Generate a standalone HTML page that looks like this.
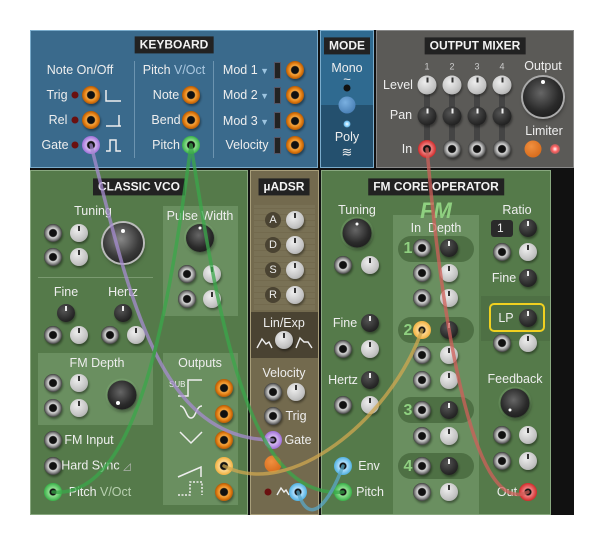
<!DOCTYPE html>
<html><head><meta charset="utf-8">
<style>
*{margin:0;padding:0;box-sizing:border-box}
body{width:604px;height:545px;background:#fff;position:relative;overflow:hidden;font-family:"Liberation Sans",sans-serif}
.p{position:absolute}
.t{position:absolute;color:#eee;font-size:12.5px;transform:translate(-50%,-50%);white-space:nowrap;line-height:1}
.h{position:absolute;background:#222;color:#f2f2f2;font-size:12px;font-weight:bold;padding:2px 5px;transform:translate(-50%,-50%);white-space:nowrap;line-height:1.1}
.c{position:absolute;transform:translate(-50%,-50%);border-radius:50%}
.j{width:18px;height:18px;background:radial-gradient(circle,#111 0 3.5px,#d8d8d8 4.5px,#8a8a8a 7px,#555 8.5px,#333 9px);box-shadow:1px 2px 2px rgba(0,0,0,.4)}
.o{width:18px;height:18px;background:radial-gradient(circle,#111 0 3.5px,#f5a640 4.5px,#e07a10 7px,#b05a08 9px);box-shadow:1px 2px 2px rgba(0,0,0,.4)}
.k{width:18px;height:18px;background:radial-gradient(circle at 40% 35%,#eee,#c4c4c4 60%,#999);box-shadow:1px 2px 2px rgba(0,0,0,.4)}
.d{width:18px;height:18px;background:radial-gradient(circle at 40% 35%,#555,#2a2a2a 60%,#111);box-shadow:1px 2px 2px rgba(0,0,0,.4)}
.k::after,.d::after{content:"";position:absolute;left:50%;top:2px;width:2px;height:5px;margin-left:-1px;background:#333}
.d::after{background:#eee}
.big{background:radial-gradient(circle at 45% 40%,#666,#2a2a2a 55%,#111);box-shadow:1px 2px 3px rgba(0,0,0,.5),0 0 0 2px rgba(150,200,140,.25)}
.led{width:7px;height:7px;background:#6a1010}
</style></head><body>
<div class="p" style="left:30px;top:30px;width:544px;height:485px;background:#111"></div>
<!-- Keyboard -->
<div class="p" style="left:30px;top:30px;width:288px;height:138px;background:#3a6a8c;border:1px solid #7aaccc"></div>
<div class="h" style="left:174px;top:45px">KEYBOARD</div>
<div class="p" style="left:134px;top:61px;width:1px;height:97px;background:#6c94b0"></div>
<div class="p" style="left:213px;top:61px;width:1px;height:97px;background:#6c94b0"></div>
<div class="t" style="left:80px;top:70px">Note On/Off</div>
<div class="t" style="left:57px;top:95px">Trig</div>
<div class="t" style="left:58px;top:120px">Rel</div>
<div class="t" style="left:55px;top:145px">Gate</div>
<div class="c led" style="left:75px;top:95px"></div>
<div class="c led" style="left:75px;top:120px"></div>
<div class="c led" style="left:75px;top:145px"></div>
<div class="c o" style="left:91px;top:95px"></div>
<div class="c o" style="left:91px;top:120px"></div>
<div class="c" style="left:91px;top:145px;width:18px;height:18px;background:radial-gradient(circle,#111 0 3.5px,#d4b8f0 4.5px,#a070d8 9px)"></div>
<svg class="p" style="left:104px;top:86px" width="20" height="66" fill="none" stroke="#eee" stroke-width="1.5">
<path d="M2 4v11h15"/><path d="M2 40h13v-11M12 40h5"/><path d="M2 65h4v-11h6v11h5"/></svg>
<div class="t" style="left:174px;top:70px">Pitch <span style="color:#aac8e0">V/Oct</span></div>
<div class="t" style="left:166px;top:95px">Note</div>
<div class="t" style="left:166px;top:120px">Bend</div>
<div class="t" style="left:166px;top:145px">Pitch</div>
<div class="c o" style="left:191px;top:95px"></div>
<div class="c o" style="left:191px;top:120px"></div>
<div class="c" style="left:191px;top:145px;width:18px;height:18px;background:radial-gradient(circle,#111 0 3.5px,#90e090 4.5px,#38b048 9px)"></div>
<div class="t" style="left:246px;top:70px">Mod 1<span style="color:#9cc4e0;font-size:9px"> ▼</span></div>
<div class="t" style="left:246px;top:95px">Mod 2<span style="color:#9cc4e0;font-size:9px"> ▼</span></div>
<div class="t" style="left:246px;top:121px">Mod 3<span style="color:#9cc4e0;font-size:9px"> ▼</span></div>
<div class="t" style="left:247px;top:145px">Velocity</div>
<div class="p" style="left:274px;top:62px;width:7px;height:17px;background:#222;border:1px solid #556"></div>
<div class="p" style="left:274px;top:87px;width:7px;height:17px;background:#222;border:1px solid #556"></div>
<div class="p" style="left:274px;top:112px;width:7px;height:17px;background:#222;border:1px solid #556"></div>
<div class="p" style="left:274px;top:137px;width:7px;height:17px;background:#222;border:1px solid #556"></div>
<div class="c o" style="left:295px;top:70px"></div>
<div class="c o" style="left:295px;top:95px"></div>
<div class="c o" style="left:295px;top:121px"></div>
<div class="c o" style="left:295px;top:145px"></div>
<!-- Mode -->
<div class="p" style="left:320px;top:30px;width:54px;height:138px;background:#2f6a90;border:1px solid #7aaccc"></div>
<div class="p" style="left:321px;top:105px;width:52px;height:62px;background:#24506e"></div>
<div class="h" style="left:347px;top:46px">MODE</div>
<div class="t" style="left:347px;top:68px">Mono</div>
<div class="t" style="left:347px;top:79px;font-size:13px">~</div>
<div class="c" style="left:347px;top:88px;width:7px;height:7px;background:#111"></div>
<div class="c" style="left:347px;top:105px;width:17px;height:17px;background:radial-gradient(circle at 40% 35%,#7ab0e0,#3a70a8)"></div>
<div class="c" style="left:347px;top:124px;width:7px;height:7px;background:radial-gradient(circle,#fff,#80d0ff 50%,rgba(80,180,255,0) 100%)"></div>
<div class="t" style="left:347px;top:137px">Poly</div>
<div class="t" style="left:347px;top:152px;font-size:13px">≋</div>
<!-- Output mixer -->
<div class="p" style="left:376px;top:30px;width:198px;height:138px;background:#5b5a57;border:1px solid #888"></div>
<div class="h" style="left:475px;top:46px">OUTPUT MIXER</div>
<div class="t" style="left:427px;top:67px;font-size:9px;color:#ccc">1</div>
<div class="t" style="left:452px;top:67px;font-size:9px;color:#ccc">2</div>
<div class="t" style="left:477px;top:67px;font-size:9px;color:#ccc">3</div>
<div class="t" style="left:502px;top:67px;font-size:9px;color:#ccc">4</div>
<div class="t" style="left:398px;top:85px">Level</div>
<div class="t" style="left:401px;top:115px">Pan</div>
<div class="t" style="left:407px;top:149px">In</div>
<div class="p" style="left:424px;top:90px;width:6px;height:55px;background:#444"></div>
<div class="p" style="left:449px;top:90px;width:6px;height:55px;background:#444"></div>
<div class="p" style="left:474px;top:90px;width:6px;height:55px;background:#444"></div>
<div class="p" style="left:499px;top:90px;width:6px;height:55px;background:#444"></div>
<div class="c k" style="left:427px;top:85px;width:19px;height:19px"></div>
<div class="c k" style="left:452px;top:85px;width:19px;height:19px"></div>
<div class="c k" style="left:477px;top:85px;width:19px;height:19px"></div>
<div class="c k" style="left:502px;top:85px;width:19px;height:19px"></div>
<div class="c d" style="left:427px;top:116px;width:19px;height:19px"></div>
<div class="c d" style="left:452px;top:116px;width:19px;height:19px"></div>
<div class="c d" style="left:477px;top:116px;width:19px;height:19px"></div>
<div class="c d" style="left:502px;top:116px;width:19px;height:19px"></div>
<div class="c" style="left:427px;top:149px;width:18px;height:18px;background:radial-gradient(circle,#111 0 3.5px,#f08080 4.5px,#d02a2a 9px)"></div>
<div class="c j" style="left:452px;top:149px"></div>
<div class="c j" style="left:477px;top:149px"></div>
<div class="c j" style="left:502px;top:149px"></div>
<div class="t" style="left:543px;top:66px">Output</div>
<div class="c big" style="left:543px;top:97px;width:40px;height:40px;box-shadow:0 0 0 2px #aaa,1px 3px 4px rgba(0,0,0,.5)"></div>
<div class="c" style="left:543px;top:82px;width:4px;height:4px;background:#fff"></div>
<div class="t" style="left:544px;top:131px">Limiter</div>
<div class="c" style="left:533px;top:149px;width:17px;height:17px;background:radial-gradient(circle at 40% 35%,#f09040,#d06010)"></div>
<div class="c" style="left:555px;top:149px;width:10px;height:10px;background:radial-gradient(circle,#fff,#ff6060 40%,rgba(255,60,60,0) 100%)"></div>
<!-- Classic VCO -->
<div class="p" style="left:30px;top:170px;width:218px;height:345px;background:#557a4a;border:1px solid #89a880"></div>
<div class="h" style="left:139px;top:187px">CLASSIC VCO</div>
<div class="p" style="left:163px;top:206px;width:75px;height:110px;background:#6a8f60"></div>
<div class="p" style="left:38px;top:277px;width:115px;height:1px;background:#7a9a70"></div>
<div class="p" style="left:38px;top:353px;width:115px;height:72px;background:#6a8f60"></div>
<div class="p" style="left:163px;top:353px;width:75px;height:152px;background:#6a8f60"></div>
<div class="t" style="left:93px;top:211px">Tuning</div>
<div class="c j" style="left:53px;top:233px"></div><div class="c k" style="left:79px;top:233px"></div>
<div class="c j" style="left:53px;top:257px"></div><div class="c k" style="left:79px;top:257px"></div>
<div class="c big" style="left:123px;top:243px;width:40px;height:40px;background:radial-gradient(circle at 45% 40%,#888,#3a3a3a 55%,#151515);box-shadow:0 0 0 2px #bbb,1px 3px 4px rgba(0,0,0,.5)"></div>
<div class="c" style="left:123px;top:231px;width:4px;height:4px;background:#fff"></div>
<div class="t" style="left:200px;top:216px">Pulse Width</div>
<div class="c big" style="left:200px;top:238px;width:28px;height:28px"></div>
<div class="c" style="left:200px;top:228px;width:3px;height:3px;background:#fff"></div>
<div class="c j" style="left:187px;top:274px"></div><div class="c k" style="left:212px;top:274px"></div>
<div class="c j" style="left:187px;top:299px"></div><div class="c k" style="left:212px;top:299px"></div>
<div class="t" style="left:66px;top:292px">Fine</div>
<div class="t" style="left:123px;top:292px">Hertz</div>
<div class="c d" style="left:66px;top:313px"></div><div class="c d" style="left:123px;top:313px"></div>
<div class="c j" style="left:53px;top:335px"></div><div class="c k" style="left:79px;top:335px"></div>
<div class="c j" style="left:110px;top:335px"></div><div class="c k" style="left:136px;top:335px"></div>
<div class="t" style="left:97px;top:363px">FM Depth</div>
<div class="c j" style="left:53px;top:383px"></div><div class="c k" style="left:79px;top:383px"></div>
<div class="c j" style="left:53px;top:408px"></div><div class="c k" style="left:79px;top:408px"></div>
<div class="c big" style="left:122px;top:395px;width:29px;height:29px"></div>
<div class="c" style="left:118px;top:403px;width:4px;height:4px;background:#fff"></div>
<div class="t" style="left:200px;top:363px">Outputs</div>
<svg class="p" style="left:168px;top:376px" width="40" height="126" fill="none" stroke="#eee" stroke-width="1.5">
<text x="1" y="11" fill="#eee" stroke="none" font-size="8" font-family="Liberation Sans">SUB</text>
<path d="M10 20h10v-16h14"/><path d="M12 30c6 0 6 12 11 12s5-12 11-12"/><path d="M12 56l11 11l11-11"/><path d="M10 101l23-10v10"/><path d="M10 119h12v-13h12v13" stroke-dasharray="2 1.5"/></svg>
<div class="c o" style="left:224px;top:388px"></div>
<div class="c o" style="left:224px;top:414px"></div>
<div class="c o" style="left:224px;top:440px"></div>
<div class="c" style="left:224px;top:466px;width:18px;height:18px;background:radial-gradient(circle,#111 0 3.5px,#ffd890 4.5px,#f0b040 9px)"></div>
<div class="c o" style="left:224px;top:492px"></div>
<div class="c j" style="left:53px;top:440px"></div><div class="t" style="left:89px;top:440px">FM Input</div>
<div class="c j" style="left:53px;top:466px"></div><div class="t" style="left:96px;top:466px">Hard Sync <span style="font-size:10px;color:#bbb">◿</span></div>
<div class="c" style="left:53px;top:492px;width:18px;height:18px;background:radial-gradient(circle,#111 0 3px,#90e090 4px,#38b048 9px)"></div>
<div class="t" style="left:100px;top:492px">Pitch <span style="color:#b8d0b0">V/Oct</span></div>
<!-- µADSR -->
<div class="p" style="left:250px;top:170px;width:69px;height:345px;background:#736a4e;border:1px solid #a89e7a"></div>
<div class="p" style="left:254px;top:205px;width:61px;height:105px;background:repeating-linear-gradient(0deg,#7a7256 0 5px,#736a4e 5px 6px),#736a4e;opacity:.9"></div>
<div class="h" style="left:284px;top:187px">µADSR</div>
<div class="p" style="left:251px;top:312px;width:67px;height:46px;background:#4a4332"></div>
<div class="c" style="left:273px;top:220px;width:16px;height:16px;background:#4a4332;color:#eee;font-size:11px;text-align:center;line-height:16px">A</div>
<div class="c" style="left:273px;top:245px;width:16px;height:16px;background:#4a4332;color:#eee;font-size:11px;text-align:center;line-height:16px">D</div>
<div class="c" style="left:273px;top:270px;width:16px;height:16px;background:#4a4332;color:#eee;font-size:11px;text-align:center;line-height:16px">S</div>
<div class="c" style="left:273px;top:295px;width:16px;height:16px;background:#4a4332;color:#eee;font-size:11px;text-align:center;line-height:16px">R</div>
<div class="c k" style="left:295px;top:220px"></div><div class="c k" style="left:295px;top:245px"></div>
<div class="c k" style="left:295px;top:270px"></div><div class="c k" style="left:295px;top:295px"></div>
<div class="t" style="left:284px;top:323px">Lin/Exp</div>
<div class="c k" style="left:284px;top:340px"></div>
<svg class="p" style="left:256px;top:334px" width="60" height="16" fill="none" stroke="#eee" stroke-width="1.4"><path d="M1 14l5-9l4 5l3-2l3 6"/><path d="M40 14l4-10l4 4h4l4 6"/></svg>
<div class="t" style="left:284px;top:373px">Velocity</div>
<div class="c j" style="left:273px;top:392px"></div><div class="c k" style="left:296px;top:392px"></div>
<div class="c j" style="left:273px;top:416px"></div><div class="t" style="left:296px;top:416px">Trig</div>
<div class="c" style="left:273px;top:440px;width:18px;height:18px;background:radial-gradient(circle,#111 0 3px,#d4b8f0 4px,#a070d8 9px)"></div><div class="t" style="left:298px;top:440px">Gate</div>
<div class="c" style="left:273px;top:464px;width:17px;height:17px;background:radial-gradient(circle at 40% 35%,#f09040,#d06010)"></div>
<div class="c led" style="left:268px;top:492px"></div>
<svg class="p" style="left:276px;top:486px" width="14" height="10" fill="none" stroke="#eee" stroke-width="1.4"><path d="M1 9l4-7l3 4l2-2l3 5"/></svg>
<div class="c" style="left:298px;top:492px;width:18px;height:18px;background:radial-gradient(circle,#111 0 3px,#b0e0ff 4px,#50b0e0 9px)"></div>
<!-- FM Core -->
<div class="p" style="left:321px;top:170px;width:230px;height:345px;background:#557a4a;border:1px solid #89a880"></div>
<div class="p" style="left:393px;top:215px;width:86px;height:299px;background:#6a8f60"></div>
<div class="p" style="left:481px;top:296px;width:69px;height:45px;background:#4e7044"></div>
<div class="h" style="left:436px;top:187px">FM CORE OPERATOR</div>
<div class="t" style="left:436px;top:211px;color:#8fd080;font-size:22px;font-weight:bold;font-style:italic">FM</div>
<div class="t" style="left:436px;top:228px">In&nbsp;&nbsp;Depth</div>
<div class="p" style="left:398px;top:236px;width:76px;height:26px;border-radius:13px;background:#4e7044"></div>
<div class="p" style="left:398px;top:317px;width:76px;height:26px;border-radius:13px;background:#4e7044"></div>
<div class="p" style="left:398px;top:397px;width:76px;height:26px;border-radius:13px;background:#4e7044"></div>
<div class="p" style="left:398px;top:453px;width:76px;height:26px;border-radius:13px;background:#4e7044"></div>
<div class="t" style="left:408px;top:249px;color:#8fd080;font-size:16px;font-weight:bold">1</div>
<div class="t" style="left:408px;top:331px;color:#8fd080;font-size:16px;font-weight:bold">2</div>
<div class="t" style="left:408px;top:411px;color:#8fd080;font-size:16px;font-weight:bold">3</div>
<div class="t" style="left:408px;top:467px;color:#8fd080;font-size:16px;font-weight:bold">4</div>
<div class="c j" style="left:422px;top:248px"></div><div class="c d" style="left:449px;top:248px"></div>
<div class="c j" style="left:422px;top:273px"></div><div class="c k" style="left:449px;top:273px"></div>
<div class="c j" style="left:422px;top:298px"></div><div class="c k" style="left:449px;top:298px"></div>
<div class="c" style="left:422px;top:330px;width:18px;height:18px;background:radial-gradient(circle,#111 0 3px,#ffd890 4px,#f0b040 9px)"></div><div class="c d" style="left:449px;top:330px"></div>
<div class="c j" style="left:422px;top:355px"></div><div class="c k" style="left:449px;top:355px"></div>
<div class="c j" style="left:422px;top:380px"></div><div class="c k" style="left:449px;top:380px"></div>
<div class="c j" style="left:422px;top:410px"></div><div class="c d" style="left:449px;top:410px"></div>
<div class="c j" style="left:422px;top:436px"></div><div class="c k" style="left:449px;top:436px"></div>
<div class="c j" style="left:422px;top:466px"></div><div class="c d" style="left:449px;top:466px"></div>
<div class="c j" style="left:422px;top:492px"></div><div class="c k" style="left:449px;top:492px"></div>
<div class="t" style="left:357px;top:210px">Tuning</div>
<div class="c big" style="left:357px;top:233px;width:29px;height:29px"></div>
<div class="c" style="left:357px;top:224px;width:3px;height:3px;background:#fff"></div>
<div class="c j" style="left:343px;top:265px"></div><div class="c k" style="left:370px;top:265px"></div>
<div class="t" style="left:345px;top:323px">Fine</div><div class="c d" style="left:370px;top:323px"></div>
<div class="c j" style="left:343px;top:349px"></div><div class="c k" style="left:370px;top:349px"></div>
<div class="t" style="left:343px;top:380px">Hertz</div><div class="c d" style="left:370px;top:380px"></div>
<div class="c j" style="left:343px;top:405px"></div><div class="c k" style="left:370px;top:405px"></div>
<div class="c" style="left:343px;top:466px;width:18px;height:18px;background:radial-gradient(circle,#111 0 3px,#b0e0ff 4px,#50b0e0 9px)"></div><div class="t" style="left:369px;top:466px">Env</div>
<div class="c" style="left:343px;top:492px;width:18px;height:18px;background:radial-gradient(circle,#111 0 3px,#90e090 4px,#38b048 9px)"></div><div class="t" style="left:370px;top:492px">Pitch</div>
<div class="t" style="left:517px;top:210px">Ratio</div>
<div class="p" style="left:491px;top:220px;width:22px;height:17px;background:#2a2a2a;border-radius:3px;color:#eee;font-size:12px;line-height:17px;padding-left:6px">1</div>
<div class="c d" style="left:528px;top:228px"></div>
<div class="c j" style="left:502px;top:252px"></div><div class="c k" style="left:528px;top:252px"></div>
<div class="t" style="left:504px;top:278px">Fine</div><div class="c d" style="left:528px;top:278px"></div>
<div class="p" style="left:489px;top:303px;width:56px;height:29px;border:2.5px solid #f0d020;border-radius:5px"></div>
<div class="t" style="left:506px;top:318px">LP</div><div class="c d" style="left:528px;top:318px"></div>
<div class="c j" style="left:502px;top:343px"></div><div class="c k" style="left:528px;top:343px"></div>
<div class="t" style="left:515px;top:379px">Feedback</div>
<div class="c big" style="left:515px;top:403px;width:29px;height:29px"></div>
<div class="c" style="left:510px;top:410px;width:3px;height:3px;background:#fff"></div>
<div class="c j" style="left:502px;top:435px"></div><div class="c k" style="left:528px;top:435px"></div>
<div class="c j" style="left:502px;top:461px"></div><div class="c k" style="left:528px;top:461px"></div>
<div class="t" style="left:507px;top:492px">Out</div>
<div class="c" style="left:528px;top:492px;width:18px;height:18px;background:radial-gradient(circle,#111 0 3px,#f08080 4px,#d02a2a 9px)"></div>
<!-- cables -->
<svg class="p" style="left:0;top:0" width="604" height="545" fill="none" stroke-width="3.5" stroke-linecap="round" opacity="0.75">
<path d="M91 145C130 300 160 440 273 440" stroke="#a68cd0"/>
<path d="M191 145C170 300 140 500 53 492" stroke="#3aa84a"/>
<path d="M191 145C220 330 250 500 343 492" stroke="#3aa84a"/>
<path d="M427 149C440 300 470 520 528 492" stroke="#d0605a"/>
<path d="M224 466C290 500 390 420 422 330" stroke="#d0a850"/>
<path d="M298 492C310 530 330 500 343 466" stroke="#5aa8c8"/>
</svg>
</body></html>
